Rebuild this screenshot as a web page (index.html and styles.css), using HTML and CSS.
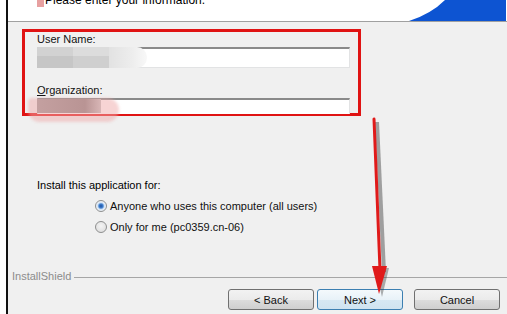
FILE: index.html
```html
<!doctype html>
<html lang="en">

<head>
  <meta charset="UTF-8" />
  <title>Customer Information</title>
  <link rel="stylesheet" href="styles.css">
</head>

<body>
  <div class="window">
    <div class="header">
      <div class="title">
        <span class="title-icon"></span>
        Please enter your information.
      </div>
      <svg class="swoosh" width="100" height="21" viewBox="0 0 100 21">
        <path d="M0 21 Q22 14 36 0 L97 0 L97 21 Z" fill="#0d54d2" />
      </svg>
    </div>

    <div class="content">
      <div class="highlight">
        <div class="field-label">User Name:</div>
        <div class="textbox"></div>
        <div class="field-label spaced"><u>O</u>rganization:</div>
        <div class="textbox short"></div>
        <div class="blur blur-user"></div>
        <div class="blur-pink"></div>
        <div class="blur blur-org"></div>
      </div>

      <div class="install-for">
        <div class="install-label">Install this application for:</div>
        <label class="radio-row">
          <span class="radio checked"></span>
          Anyone who uses this computer (all users)
        </label>
        <label class="radio-row">
          <span class="radio"></span>
          Only for me (pc0359.cn-06)
        </label>
      </div>
    </div>

    <div class="footer">
      <div class="brand">
        <span>InstallShield</span>
        <span class="brand-line"></span>
      </div>
      <div class="buttons">
        <button class="btn">&lt; Back</button>
        <button class="btn default">Next &gt;</button>
        <button class="btn cancel">Cancel</button>
      </div>
    </div>
  </div>

  <svg class="arrow" width="507" height="314" viewBox="0 0 507 314">
    <line x1="377" y1="122" x2="384" y2="272" stroke="rgba(60,60,60,0.45)" stroke-width="4" />
    <polygon points="375,268 389,268 382,297" fill="rgba(60,60,60,0.4)" />
    <line x1="374" y1="119" x2="380" y2="270" stroke="#e01a1a" stroke-width="3" stroke-linecap="round" />
    <polygon points="372,266 387,266 379,294" fill="#e01a1a" />
  </svg>
</body>

</html>
```

FILE: styles.css
```css
body {
  margin: 0;
  background-color: #ffffff;
  font-family: 'Liberation Sans', Arial, sans-serif;
  font-size: 11px;
  color: #000000;
}

.window {
  position: relative;
  margin-left: 6px;
  width: 501px;
  height: 314px;
  border-left: 2px solid #111111;
  background-color: #f0f0f0;
  display: flex;
  flex-direction: column;
  overflow: hidden;
}

.header {
  height: 21px;
  background-color: #ffffff;
  border-bottom: 1px solid #a0a0a0;
  display: flex;
  justify-content: space-between;
  align-items: flex-end;
}

.title {
  display: flex;
  align-items: center;
  gap: 1px;
  margin-top: -7px;
  margin-left: 29px;
  height: 14px;
  line-height: 14px;
  font-size: 12px;
  align-self: flex-start;
}

.title-icon {
  display: inline-block;
  width: 7px;
  height: 9px;
  background-color: #e7a0a0;
  margin-top: 4px;
}

.swoosh {
  display: block;
}

.content {
  flex: 1;
}

.highlight {
  position: relative;
  margin: 7px 0 0 14px;
  width: 321px;
  height: 81px;
  border: 3px solid #e01313;
  padding-left: 12px;
}

.field-label {
  line-height: 14px;
  color: #111111;
}

.field-label.spaced {
  margin-top: 15px;
}

.textbox {
  margin-top: 1px;
  width: 311px;
  height: 18px;
  background-color: #ffffff;
  border: 1px solid #e2e3e4;
  border-top: 2px solid #8a8a8a;
}

.textbox.short {
  height: 14px;
  border-bottom: none;
}

.blur {
  position: absolute;
}

.blur-user {
  left: 12px;
  top: 15px;
  width: 110px;
  height: 21px;
  border-radius: 0 10px 10px 0;
  background:
    linear-gradient(#d2d2d2 0 45%, #c6c6c6 45% 100%) 0 0 / 36px 100% no-repeat,
    linear-gradient(#dcdcdc 0 45%, #cfcfcf 45% 100%) 36px 0 / 36px 100% no-repeat,
    linear-gradient(90deg, #e2e2e2, #ededed 60%, #f8f8f8) 72px 0 / 38px 100% no-repeat;
  filter: blur(0.6px);
}

.blur-pink {
  position: absolute;
  left: 3px;
  top: 66px;
  width: 91px;
  height: 24px;
  border-radius: 4px 12px 12px 12px;
  background-color: rgba(240, 170, 170, 0.5);
  filter: blur(1.5px);
}

.blur-org {
  left: 12px;
  top: 67px;
  width: 64px;
  height: 14px;
  background: linear-gradient(90deg, #c4a0a0 0%, #b99494 75%, #d8b6b6 100%);
  filter: blur(0.5px);
}

.install-for {
  margin: 62px 0 0 29px;
}

.install-label {
  line-height: 14px;
  margin-bottom: 7px;
}

.radio-row {
  display: flex;
  align-items: center;
  gap: 3px;
  margin-left: 58px;
  height: 14px;
  margin-bottom: 7px;
  color: #111111;
}

.radio {
  display: inline-block;
  width: 10px;
  height: 10px;
  border: 1px solid #8e8f8f;
  border-radius: 50%;
  background: radial-gradient(circle at 50% 40%, #f4f4f4, #d9d9d9);
}

.radio.checked {
  background: radial-gradient(circle, #1e4f9c 0, #3d7fd0 2px, #d5e4f5 3.5px, #eef2f6 5px);
}

.footer {
  height: 46px;
}

.brand {
  display: flex;
  align-items: center;
  gap: 3px;
  padding-left: 4px;
  padding-top: 2px;
  height: 12px;
  font-size: 11px;
  color: #8c8c8c;
}

.brand-line {
  flex: 1;
  height: 1px;
  background-color: #a6a6a6;
  margin-top: 2px;
}

.buttons {
  display: flex;
  justify-content: flex-end;
  gap: 3px;
  margin-top: 7px;
  padding-right: 9px;
}

.btn {
  width: 86px;
  height: 21px;
  padding: 0;
  font-family: 'Liberation Sans', Arial, sans-serif;
  font-size: 11px;
  color: #111111;
  border: 1px solid #707070;
  border-radius: 3px;
  background: linear-gradient(#f2f2f2 0%, #ebebeb 50%, #dddddd 51%, #cfcfcf 100%);
}

.btn.default {
  border-color: #3c7fb1;
  background: linear-gradient(#f4f9fc 0%, #e8f2f8 50%, #d6e8f3 51%, #cfe3f0 100%);
}

.btn.cancel {
  margin-left: 8px;
}

.arrow {
  position: absolute;
  left: 0;
  top: 0;
  pointer-events: none;
}
```
